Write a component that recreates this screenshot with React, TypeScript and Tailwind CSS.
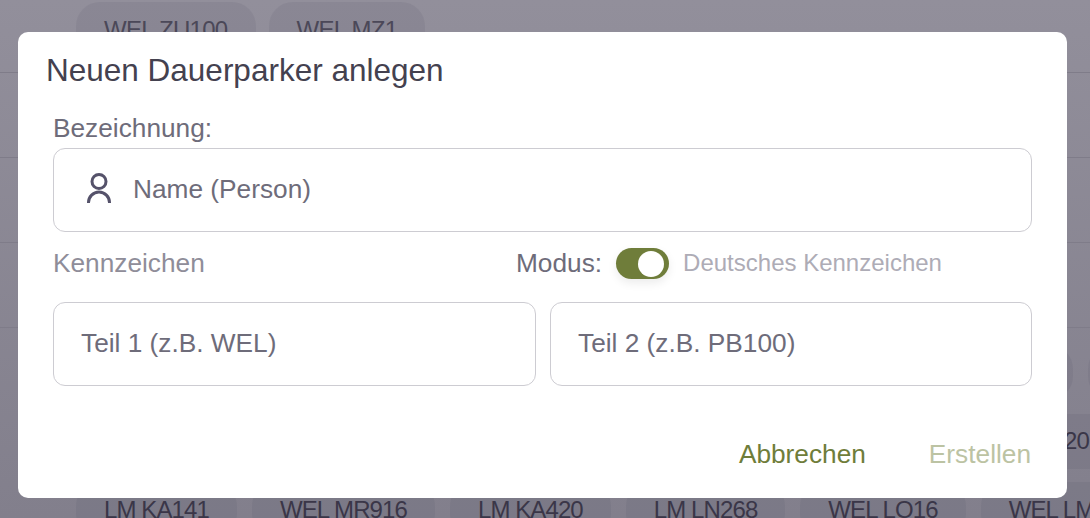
import { useState } from 'react'

const bottomChips = ['LM KA141', 'WEL MR916', 'LM KA420', 'LM LN268', 'WEL LO16', 'WEL LM1']

function Chip({ label, className = '' }: { label: string; className?: string }) {
  return (
    <div className={`h-[55px] shrink-0 rounded-[24px] bg-[#35304a]/[0.08] px-7 flex items-center text-[24px] leading-none ${className}`}>
      {label}
    </div>
  )
}

function PersonIcon() {
  return (
    <svg width="28" height="34" viewBox="0 0 28 34" fill="none" stroke="#55526a" strokeWidth="3" className="mb-[2px] shrink-0">
      <circle cx="14" cy="10.5" r="7" />
      <path d="M3.5 32v-.5a10.5 10.5 0 0 1 21 0v.5" />
    </svg>
  )
}

export default function App() {
  const [german, setGerman] = useState(true)

  return (
    <div className="relative h-[518px] w-[1090px] overflow-hidden bg-gradient-to-b from-[#928f9b] to-[#827f8c] font-['Liberation_Sans',Arial,sans-serif]">
      {/* Seite hinter dem Dialog */}
      <div className="h-[73px] border-b border-[#7f7c89] pl-[76px] pt-[2px]">
        <div className="flex gap-[13px] tracking-[-0.7px] text-[#4b4858]">
          <Chip label="WEL ZU100" />
          <Chip label="WEL MZ1" />
        </div>
      </div>
      <div className="h-[85px] border-b border-[#7f7c89]" />
      <div className="h-[85px] border-b border-[#7f7c89]" />
      <div className="h-[85px] border-b border-[#7f7c89]" />
      <div className="flex flex-col gap-[13.5px] pl-[76px] pt-[17px] tracking-[-0.9px] text-[#3a3648]">
        <div className="flex gap-[15px]">
          <Chip label="" className="w-[997px]" />
          <Chip label="" className="w-[100px]" />
        </div>
        <div className="flex w-[1041px] justify-end">
          <Chip label="LM KA420" />
        </div>
        <div className="flex gap-[15px]">
          {bottomChips.map((c) => (
            <Chip key={c} label={c} />
          ))}
        </div>
      </div>

      {/* Dialog */}
      <div className="absolute left-[18px] top-[32px] flex h-[466px] w-[1049px] flex-col rounded-[10px] bg-white pl-[35px] pr-[35px]">
        <h2 className="-ml-[7px] mt-[20px] text-[31.5px] font-normal leading-[36px] text-[#44414f]">Neuen Dauerparker anlegen</h2>

        <label className="mt-[23px] text-[26.25px] leading-[34px] text-[#6e6c7a]">Bezeichnung:</label>
        <div className="mt-[3px] flex h-[84px] items-center gap-[20px] rounded-[12px] border border-[#cdccd2] pb-[2px] pl-[31px]">
          <PersonIcon />
          <input
            placeholder="Name (Person)"
            className="w-full bg-transparent text-[26.25px] leading-none outline-none placeholder:text-[#6e6c7a]"
          />
        </div>

        <div className="mt-[16px] flex h-[31px] items-center">
          <span className="w-[463px] text-[26.25px] text-[#8f8d99]">Kennzeichen</span>
          <span className="text-[26.25px] text-[#6e6c7a]">Modus:</span>
          <button
            onClick={() => setGerman(!german)}
            className="relative ml-[14px] h-[31px] w-[53px] rounded-full bg-[#6f7d3a] shadow-[0_4px_10px_rgba(0,0,0,0.08)]"
          >
            <span className={`absolute top-[2.5px] h-[26px] w-[26px] rounded-full bg-white ${german ? 'left-[22px]' : 'left-[3px]'}`} />
          </button>
          <span className="mb-[2px] ml-[14px] text-[24px] text-[#aeacb6]">Deutsches Kennzeichen</span>
        </div>

        <div className="mt-[23px] flex gap-[14px]">
          <div className="flex h-[84px] w-[483px] items-center rounded-[12px] border border-[#cdccd2] pb-[2px] pl-[27px]">
            <input
              placeholder="Teil 1 (z.B. WEL)"
              className="w-full bg-transparent text-[26.25px] leading-none outline-none placeholder:text-[#6e6c7a]"
            />
          </div>
          <div className="flex h-[84px] w-[482px] items-center rounded-[12px] border border-[#cdccd2] pb-[2px] pl-[27px]">
            <input
              placeholder="Teil 2 (z.B. PB100)"
              className="w-full bg-transparent text-[26.25px] leading-none outline-none placeholder:text-[#6e6c7a]"
            />
          </div>
        </div>

        <div className="mt-[50px] flex justify-end gap-[63px] pr-px text-[26.25px] leading-[36px]">
          <button className="text-[#6f7d3a]">Abbrechen</button>
          <button disabled className="text-[#bcc3a3]">Erstellen</button>
        </div>
      </div>
    </div>
  )
}
